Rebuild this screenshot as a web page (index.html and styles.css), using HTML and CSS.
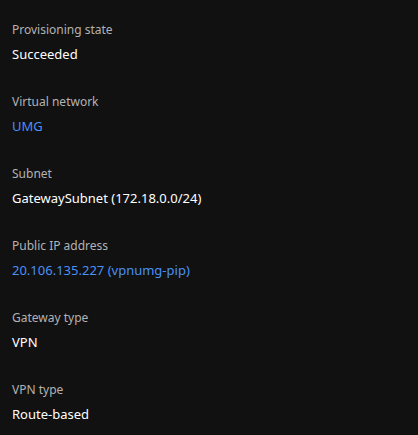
FILE: index.html
```html
<!DOCTYPE html>
<html>
<head>
<meta charset="utf-8">
<link rel="stylesheet" href="styles.css">
</head>
<body>
<dl class="props">
  <div class="prop"><dt>Provisioning state</dt><dd>Succeeded</dd></div>
  <div class="prop"><dt>Virtual network</dt><dd><a href="#">UMG</a></dd></div>
  <div class="prop"><dt>Subnet</dt><dd>GatewaySubnet (172.18.0.0/24)</dd></div>
  <div class="prop"><dt>Public IP address</dt><dd><a href="#">20.106.135.227 (vpnumg-pip)</a></dd></div>
  <div class="prop"><dt>Gateway type</dt><dd>VPN</dd></div>
  <div class="prop"><dt>VPN type</dt><dd>Route-based</dd></div>
</dl>
</body>
</html>
```
FILE: styles.css
```css
html, body {
  margin: 0;
  background: #111111;
}
body {
  font-family: "Noto Sans", "Open Sans", sans-serif;
  overflow: hidden;
}
.props {
  margin: 0;
  padding: 20px 12px 0;
  display: flex;
  flex-direction: column;
  gap: 28px;
}
.prop {
  display: flex;
  flex-direction: column;
  gap: 5px;
}
.prop dt {
  font-size: 12px;
  line-height: 19px;
  color: #b3b3b3;
}
.prop dd {
  margin: 0;
  font-size: 13px;
  line-height: 20px;
  color: #ffffff;
}
.prop dd a {
  color: #4a90f7;
  text-decoration: none;
}
```
